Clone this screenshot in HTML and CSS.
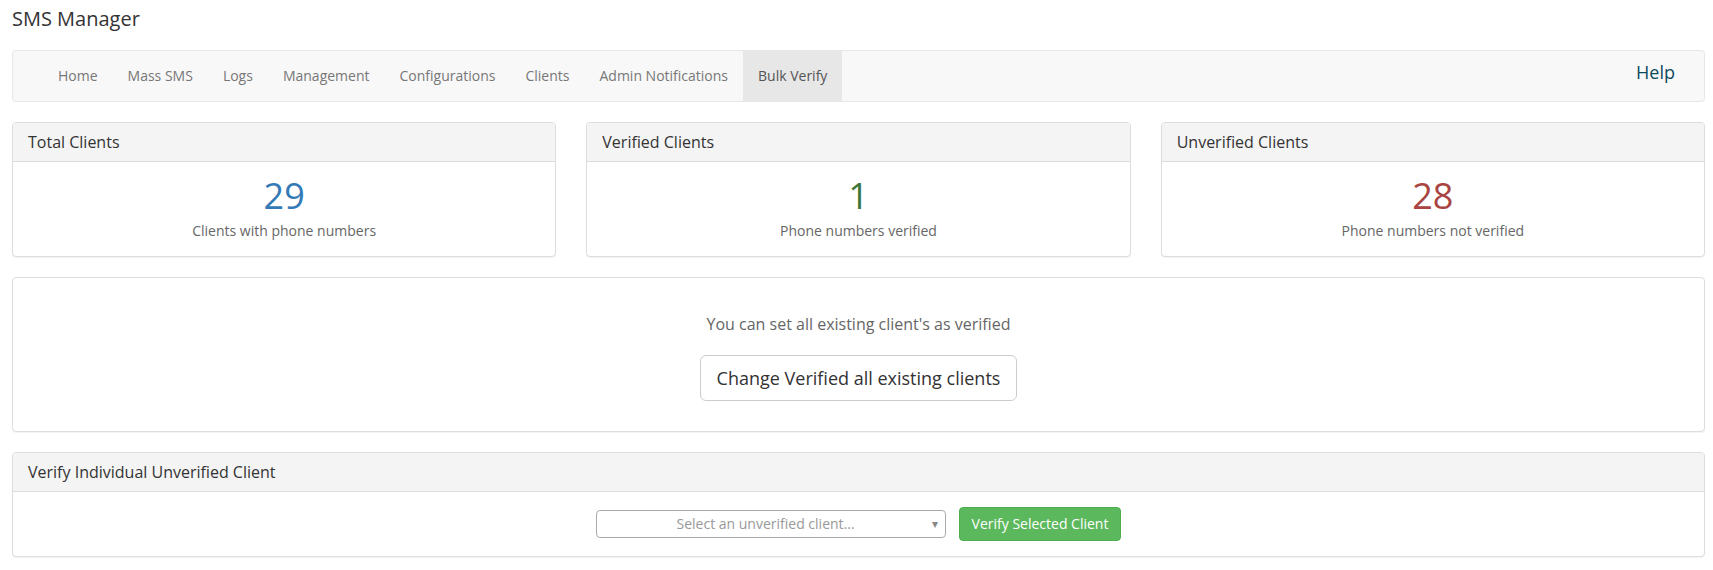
FILE: index.html
```html
<!DOCTYPE html>
<html lang="en">
<head>
  <meta charset="UTF-8" />
  <meta name="viewport" content="width=device-width, initial-scale=1.0"/>
  <title>SMS Manager - Bulk Verify</title>

  <!-- Page styles -->
  <link rel="stylesheet" href="styles.css">
</head>
<body>
  <h1 class="page-title">SMS Manager</h1>

  <!-- Module Navigation -->
  <nav class="module-nav">
    <ul class="nav-links">
      <li><a href="#">Home</a></li>
      <li><a href="#">Mass SMS</a></li>
      <li><a href="#">Logs</a></li>
      <li><a href="#">Management</a></li>
      <li><a href="#">Configurations</a></li>
      <li><a href="#">Clients</a></li>
      <li><a href="#">Admin Notifications</a></li>
      <li class="active"><a href="#">Bulk Verify</a></li>
    </ul>
    <a href="#" class="nav-help">Help</a>
  </nav>

  <!-- Stats Section -->
  <div class="stats-row">
    <div class="panel">
      <div class="panel-heading">Total Clients</div>
      <div class="panel-body stat-body">
        <div class="stat-number stat-total">29</div>
        <div class="stat-label">Clients with phone numbers</div>
      </div>
    </div>
    <div class="panel">
      <div class="panel-heading">Verified Clients</div>
      <div class="panel-body stat-body">
        <div class="stat-number stat-verified">1</div>
        <div class="stat-label">Phone numbers verified</div>
      </div>
    </div>
    <div class="panel">
      <div class="panel-heading">Unverified Clients</div>
      <div class="panel-body stat-body">
        <div class="stat-number stat-unverified">28</div>
        <div class="stat-label">Phone numbers not verified</div>
      </div>
    </div>
  </div>

  <!-- Verify All Section -->
  <div class="panel bulk-panel">
    <p class="bulk-text">You can set all existing client's as verified</p>
    <button class="btn btn-default btn-lg">Change Verified all existing clients</button>
  </div>

  <!-- Individual Verify Section -->
  <div class="panel">
    <div class="panel-heading">Verify Individual Unverified Client</div>
    <div class="panel-body verify-body">
      <div class="client-select">
        <span class="select-placeholder">Select an unverified client...</span>
        <span class="select-arrow">&#9662;</span>
      </div>
      <button class="btn btn-success">Verify Selected Client</button>
    </div>
  </div>
</body>
</html>
```

FILE: styles.css
```css
/* General Styles */
body {
  font-family: "Open Sans", Arial, sans-serif;
  font-size: 14px;
  color: #333;
  margin: 0;
  padding: 0 8px 0 12px;
  background-color: #ffffff;
}

.page-title {
  font-size: 20px;
  font-weight: normal;
  line-height: 22px;
  color: #333;
  margin: 0 0 20px 0;
  padding-top: 8px;
}

/* Module Navigation */
.module-nav {
  display: flex;
  align-items: flex-start;
  background-color: #f8f8f8;
  border: 1px solid #e7e7e7;
  border-radius: 4px;
  height: 50px;
  padding-left: 30px;
  margin-bottom: 20px;
}

.nav-links {
  display: flex;
  list-style: none;
  margin: 0;
  padding: 0;
}

.nav-links a {
  display: block;
  padding: 15px;
  line-height: 20px;
  color: #777;
  text-decoration: none;
}

.nav-links .active a {
  background-color: #e7e7e7;
  color: #555;
}

.nav-help {
  margin-left: auto;
  margin-right: 29px;
  margin-top: 11px;
  font-size: 18px;
  line-height: 20px;
  color: #0b4a5e;
  text-decoration: none;
}

/* Panels */
.panel {
  background-color: #fff;
  border: 1px solid #ddd;
  border-radius: 4px;
  box-shadow: 0 1px 1px rgba(0, 0, 0, 0.05);
  margin-bottom: 20px;
}

.panel-heading {
  background-color: #f4f4f4;
  border-bottom: 1px solid #ddd;
  border-radius: 3px 3px 0 0;
  padding: 10px 15px;
  font-size: 16px;
  line-height: 18px;
  color: #333;
}

.panel-body {
  padding: 15px;
}

/* Stats Section */
.stats-row {
  display: grid;
  grid-template-columns: repeat(3, 1fr);
  gap: 30px;
}

.stat-body {
  text-align: center;
}

.stat-number {
  font-size: 36px;
  line-height: 36px;
  margin-top: 1px;
}

.stat-total { color: #337ab7; }
.stat-verified { color: #3c763d; }
.stat-unverified { color: #a94442; }

.stat-label {
  margin-top: 7px;
  line-height: 20px;
  color: #666;
}

/* Verify All Section */
.bulk-panel {
  text-align: center;
  padding: 35px 15px 30px;
}

.bulk-text {
  font-size: 16px;
  line-height: 22px;
  color: #666;
  margin: 0 0 20px 0;
}

/* Buttons */
.btn {
  font-family: "Open Sans", Arial, sans-serif;
  font-size: 14px;
  line-height: 20px;
  padding: 6px 12px;
  border: 1px solid transparent;
  border-radius: 4px;
  cursor: pointer;
}

.btn-default {
  background-color: #fff;
  border-color: #ccc;
  color: #333;
}

.btn-lg {
  font-size: 18px;
  line-height: 24px;
  padding: 10px 16px;
  border-radius: 6px;
}

.btn-success {
  background-color: #5cb85c;
  border-color: #4cae4c;
  color: #fff;
}

/* Individual Verify Section */
.verify-body {
  display: flex;
  justify-content: center;
  align-items: center;
  gap: 13px;
}

.client-select {
  position: relative;
  box-sizing: border-box;
  width: 350px;
  height: 28px;
  border: 1px solid #aaa;
  border-radius: 4px;
  padding-right: 10px;
  display: flex;
  align-items: center;
  justify-content: center;
}

.select-placeholder {
  color: #999;
  line-height: 26px;
}

.select-arrow {
  position: absolute;
  right: 7px;
  top: 0;
  line-height: 26px;
  font-size: 12px;
  color: #888;
}
```
